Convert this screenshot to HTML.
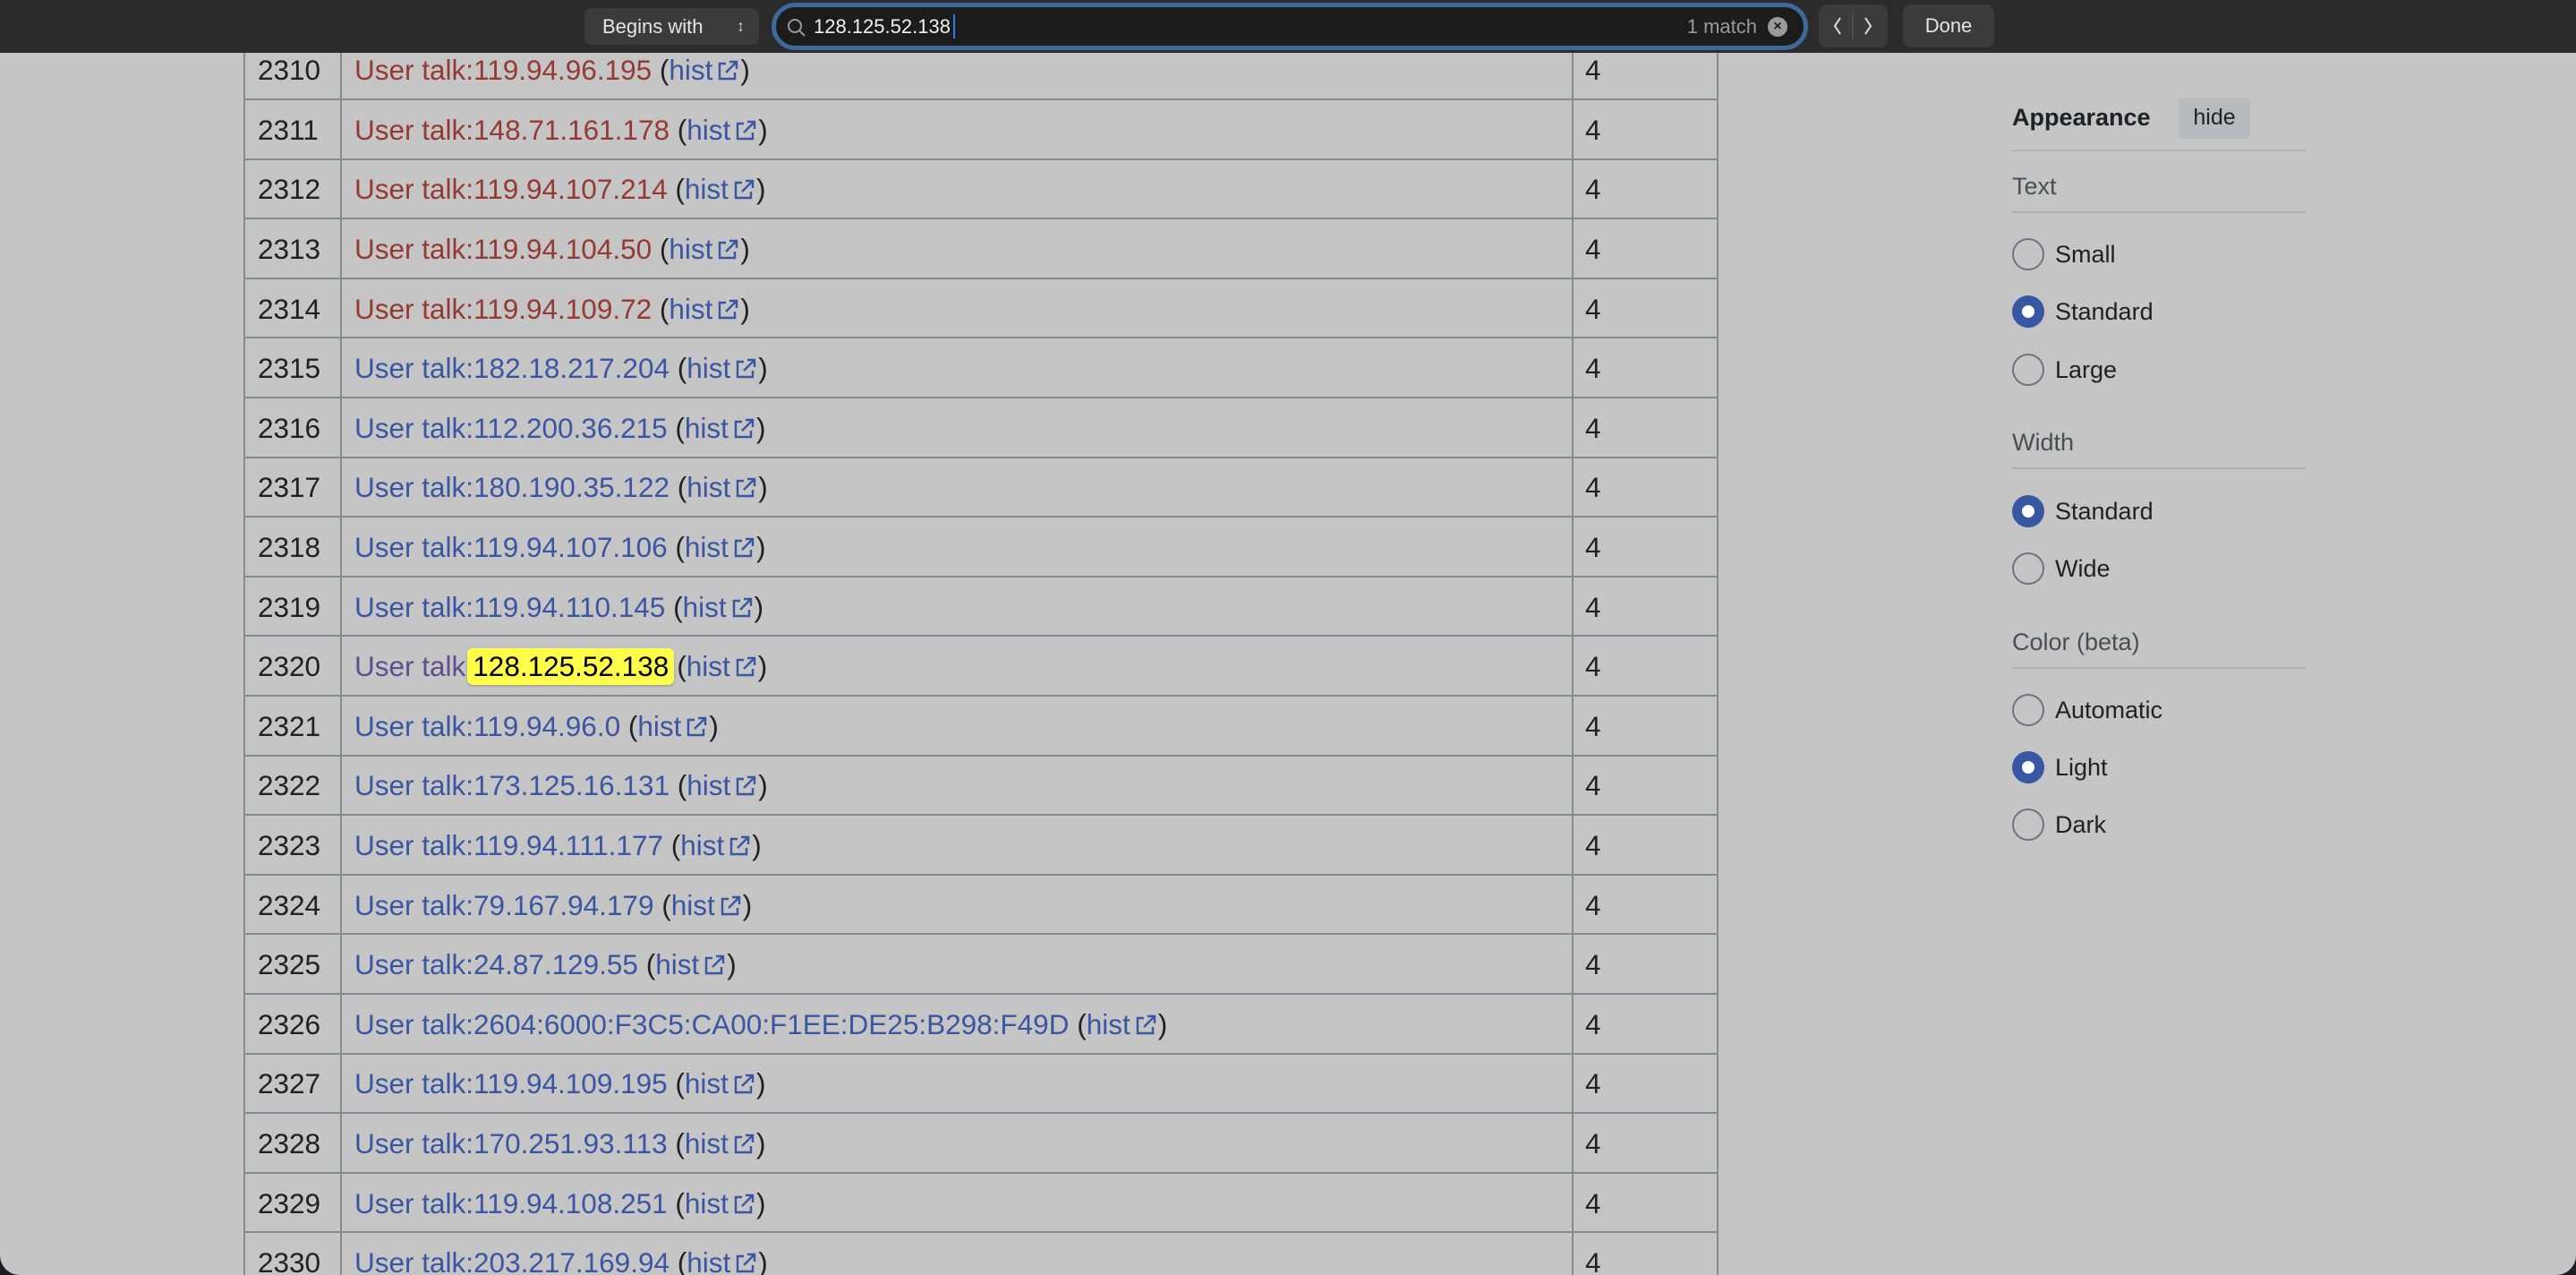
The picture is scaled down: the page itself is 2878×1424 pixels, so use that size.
<!DOCTYPE html>
<html><head><meta charset="utf-8">
<style>
*{margin:0;padding:0;box-sizing:border-box}
html,body{width:2878px;height:1424px;overflow:hidden;background:#1a1d22}
body{font-family:"Liberation Sans",Arial,sans-serif}
#win{position:absolute;left:0;top:0;width:2878px;height:1424px;background:#c5c5c5;border-radius:0 0 22px 22px;overflow:hidden}
.row{position:absolute;left:272px;width:1648px;height:66.6px;border-bottom:2px solid #878b91;border-left:2px solid #878b91;border-right:2px solid #878b91;font-size:31.5px;color:#202122}
.row .c{position:absolute;top:0;bottom:0;display:flex;align-items:center;padding-top:2px}
.row .n{left:14px}
.row .l{left:106px;border-left:2px solid #878b91;padding-left:14px;width:1378px;height:100%}
.row .v{left:1482px;border-left:2px solid #878b91;padding-left:13px;height:100%;width:165px}
.red{color:#953a32}.blue{color:#3a56a2}.vis{color:#5b4f8c}
.ext{display:inline-block;width:24px;height:24px;vertical-align:-2px;margin-left:5px;margin-right:2px}
.hl{background:#ffff4a;color:#000;border-radius:6px;padding:2px 6px;margin:0 3px 0 2px;box-shadow:0 1px 2px rgba(0,0,0,.3)}
#tb{position:absolute;left:0;top:0;width:2878px;height:59px;background:#2b2b2b}
.btn{position:absolute;background:#3b3b3b;border-radius:9px;color:#e6e6e6;font-size:22px;display:flex;align-items:center}
#sf{position:absolute;left:862px;top:3px;width:1158px;height:53px;border:5px solid #3b6a9b;border-radius:27px;background:#1c1c1c}
.side{position:absolute;left:2248px;font-size:27px;color:#202122}
.hr{position:absolute;left:2248px;width:328px;height:2px;background:#b2b3b7}
.rad{position:absolute;left:2248px;width:36px;height:36px;border-radius:50%;border:2.5px solid #6f7378}
.rad.on{border:11px solid #3757a3;background:#fff}
.lbl{position:absolute;left:2296px;font-size:27px;color:#202122;line-height:36px}
.hdr{position:absolute;left:2248px;font-size:27px;color:#4a4d52}
</style></head><body>
<div id="win"></div>
<script>
var d=[["2310","red","User talk:119.94.96.195"],["2311","red","User talk:148.71.161.178"],["2312","red","User talk:119.94.107.214"],["2313","red","User talk:119.94.104.50"],["2314","red","User talk:119.94.109.72"],["2315","blue","User talk:182.18.217.204"],["2316","blue","User talk:112.200.36.215"],["2317","blue","User talk:180.190.35.122"],["2318","blue","User talk:119.94.107.106"],["2319","blue","User talk:119.94.110.145"],["2320","vis",""],["2321","blue","User talk:119.94.96.0"],["2322","blue","User talk:173.125.16.131"],["2323","blue","User talk:119.94.111.177"],["2324","blue","User talk:79.167.94.179"],["2325","blue","User talk:24.87.129.55"],["2326","blue","User talk:2604:6000:F3C5:CA00:F1EE:DE25:B298:F49D"],["2327","blue","User talk:119.94.109.195"],["2328","blue","User talk:170.251.93.113"],["2329","blue","User talk:119.94.108.251"],["2330","blue","User talk:203.217.169.94"]];
var ext='<svg class="ext" viewBox="0 0 12 12"><path d="M5 2H1.5v8.5H10V7M7 1h4v4M11 1 5 7" fill="none" stroke="#3a56a2" stroke-width="1.2"/></svg>';
var h='';
d.forEach(function(r,i){var t=45.4+66.6*i;
var link=r[1]=="vis"?'<span class="vis">User talk</span><span class="hl">128.125.52.138</span>':'<span class="'+r[1]+'">'+r[2]+'</span>&nbsp;';
h+='<div class="row" style="top:'+t+'px"><div class="c n">'+r[0]+'</div><div class="c l">'+link+'(<span class="blue">hist'+ext+'</span>)</div><div class="c v">4</div></div>';});
document.getElementById('win').innerHTML=h;
</script>
<div id="tb">
<div class="btn" style="left:653px;top:9px;width:195px;height:41px;padding-left:20px">Begins with<span style="position:absolute;right:16px;font-size:18px;color:#ccc">&#8597;</span></div>
<div id="sf">
<svg style="position:absolute;left:12px;top:12px" width="22" height="22" viewBox="0 0 22 22"><circle cx="9" cy="9" r="7" fill="none" stroke="#999" stroke-width="2"/><path d="M14 14l6 6" stroke="#999" stroke-width="2"/></svg>
<span style="position:absolute;left:42px;top:9px;font-size:22px;color:#f0f0f0">128.125.52.138</span>
<span style="position:absolute;left:198px;top:8px;width:2px;height:27px;background:#2f7cf6"></span>
<span style="position:absolute;right:52px;top:9px;font-size:22px;color:#9a9a9a">1 match</span>
<span style="position:absolute;right:18px;top:11px;width:22px;height:22px;border-radius:50%;background:#9a9a9a;color:#1c1c1c;font-size:16px;font-weight:bold;text-align:center;line-height:22px">×</span>
</div>
<div class="btn" style="left:2032px;top:5px;width:77px;height:48px"><svg width="77" height="48" viewBox="0 0 77 48"><path d="M24 15l-6 9 6 9M52 15l6 9-6 9" fill="none" stroke="#ddd" stroke-width="2"/><path d="M38 10v28" stroke="#555" stroke-width="1.5"/></svg></div>
<div class="btn" style="left:2126px;top:5px;width:102px;height:48px;justify-content:center">Done</div>
</div>
<div class="side" style="top:116px;font-weight:bold">Appearance</div>
<div style="position:absolute;left:2434px;top:109px;width:80px;height:46px;background:#b9babe;border-radius:4px;font-size:25px;color:#202122;text-align:center;line-height:44px">hide</div>
<div class="hr" style="top:167px"></div>
<div class="hdr" style="top:193px">Text</div>
<div class="hr" style="top:236px"></div>
<div class="rad" style="top:266px"></div><div class="lbl" style="top:266px">Small</div>
<div class="rad on" style="top:330px"></div><div class="lbl" style="top:330px">Standard</div>
<div class="rad" style="top:395px"></div><div class="lbl" style="top:395px">Large</div>
<div class="hdr" style="top:479px">Width</div>
<div class="hr" style="top:522px"></div>
<div class="rad on" style="top:553px"></div><div class="lbl" style="top:553px">Standard</div>
<div class="rad" style="top:617px"></div><div class="lbl" style="top:617px">Wide</div>
<div class="hdr" style="top:702px">Color (beta)</div>
<div class="hr" style="top:745px"></div>
<div class="rad" style="top:775px"></div><div class="lbl" style="top:775px">Automatic</div>
<div class="rad on" style="top:839px"></div><div class="lbl" style="top:839px">Light</div>
<div class="rad" style="top:903px"></div><div class="lbl" style="top:903px">Dark</div>
</body></html>
